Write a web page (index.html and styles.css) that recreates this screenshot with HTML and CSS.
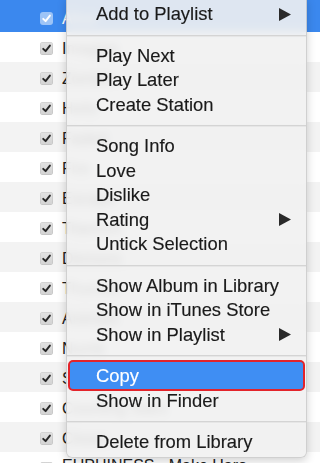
FILE: index.html
```html
<!DOCTYPE html>
<html>
<head>
<meta charset="utf-8">
<link rel="stylesheet" href="styles.css">
</head>
<body>
<div class="list">
  <div class="row sel"><span class="cb"><svg viewBox="0 0 13 13" width="13" height="13"><path d="M3.2 6.8 L5.6 9.2 L9.9 3.6" /></svg></span><span class="title">Alive</span></div>
  <div class="row"><span class="cb"><svg viewBox="0 0 13 13" width="13" height="13"><path d="M3.2 6.8 L5.6 9.2 L9.9 3.6" /></svg></span><span class="title">Imagine</span></div>
  <div class="row alt"><span class="cb"><svg viewBox="0 0 13 13" width="13" height="13"><path d="M3.2 6.8 L5.6 9.2 L9.9 3.6" /></svg></span><span class="title">Zombie</span></div>
  <div class="row"><span class="cb"><svg viewBox="0 0 13 13" width="13" height="13"><path d="M3.2 6.8 L5.6 9.2 L9.9 3.6" /></svg></span><span class="title">Hello</span></div>
  <div class="row alt"><span class="cb"><svg viewBox="0 0 13 13" width="13" height="13"><path d="M3.2 6.8 L5.6 9.2 L9.9 3.6" /></svg></span><span class="title">Faded</span></div>
  <div class="row"><span class="cb"><svg viewBox="0 0 13 13" width="13" height="13"><path d="M3.2 6.8 L5.6 9.2 L9.9 3.6" /></svg></span><span class="title">Fire</span></div>
  <div class="row alt"><span class="cb"><svg viewBox="0 0 13 13" width="13" height="13"><path d="M3.2 6.8 L5.6 9.2 L9.9 3.6" /></svg></span><span class="title">Escape</span></div>
  <div class="row"><span class="cb"><svg viewBox="0 0 13 13" width="13" height="13"><path d="M3.2 6.8 L5.6 9.2 L9.9 3.6" /></svg></span><span class="title">Titanium</span></div>
  <div class="row alt"><span class="cb"><svg viewBox="0 0 13 13" width="13" height="13"><path d="M3.2 6.8 L5.6 9.2 L9.9 3.6" /></svg></span><span class="title">Demons</span></div>
  <div class="row"><span class="cb"><svg viewBox="0 0 13 13" width="13" height="13"><path d="M3.2 6.8 L5.6 9.2 L9.9 3.6" /></svg></span><span class="title">Thunder</span></div>
  <div class="row alt"><span class="cb"><svg viewBox="0 0 13 13" width="13" height="13"><path d="M3.2 6.8 L5.6 9.2 L9.9 3.6" /></svg></span><span class="title">Animals</span></div>
  <div class="row"><span class="cb"><svg viewBox="0 0 13 13" width="13" height="13"><path d="M3.2 6.8 L5.6 9.2 L9.9 3.6" /></svg></span><span class="title">Numb</span></div>
  <div class="row alt"><span class="cb"><svg viewBox="0 0 13 13" width="13" height="13"><path d="M3.2 6.8 L5.6 9.2 L9.9 3.6" /></svg></span><span class="title">Sugar</span></div>
  <div class="row"><span class="cb"><svg viewBox="0 0 13 13" width="13" height="13"><path d="M3.2 6.8 L5.6 9.2 L9.9 3.6" /></svg></span><span class="title">Counting Stars</span></div>
  <div class="row alt"><span class="cb"><svg viewBox="0 0 13 13" width="13" height="13"><path d="M3.2 6.8 L5.6 9.2 L9.9 3.6" /></svg></span><span class="title">Closer</span></div>
  <div class="row last"><span class="cb"><svg viewBox="0 0 13 13" width="13" height="13"><path d="M3.2 6.8 L5.6 9.2 L9.9 3.6" /></svg></span><span class="title">EUPHINESS - Make Haro</span></div>
</div>

<div class="menu">
  <div class="item"><span>Add to Playlist</span><svg class="arrow" viewBox="0 0 12 13" width="12" height="13"><polygon points="0,0 12,6.5 0,13"/></svg></div>
  <div class="sep"></div>
  <div class="item"><span>Play Next</span></div>
  <div class="item"><span>Play Later</span></div>
  <div class="item"><span>Create Station</span></div>
  <div class="sep"></div>
  <div class="item"><span>Song Info</span></div>
  <div class="item"><span>Love</span></div>
  <div class="item"><span>Dislike</span></div>
  <div class="item"><span>Rating</span><svg class="arrow" viewBox="0 0 12 13" width="12" height="13"><polygon points="0,0 12,6.5 0,13"/></svg></div>
  <div class="item"><span>Untick Selection</span></div>
  <div class="sep"></div>
  <div class="item"><span>Show Album in Library</span></div>
  <div class="item"><span>Show in iTunes Store</span></div>
  <div class="item"><span>Show in Playlist</span><svg class="arrow" viewBox="0 0 12 13" width="12" height="13"><polygon points="0,0 12,6.5 0,13"/></svg></div>
  <div class="sep"></div>
  <div class="item copy"><span>Copy</span></div>
  <div class="item"><span>Show in Finder</span></div>
  <div class="sep"></div>
  <div class="item"><span>Delete from Library</span></div>
</div>
</body>
</html>
```

FILE: styles.css
```css
html, body {
  margin: 0;
  padding: 0;
  width: 320px;
  height: 463px;
  overflow: hidden;
  background: #ffffff;
  font-family: "Liberation Sans", Arial, sans-serif;
}

.list {
  display: flex;
  flex-direction: column;
}

.row {
  height: 30px;
  display: flex;
  align-items: center;
  gap: 9px;
  padding-left: 40px;
  padding-top: 3px;
  box-sizing: border-box;
  background: #ffffff;
  color: #222222;
  font-size: 16px;
  white-space: nowrap;
}

.row.alt {
  background: #f3f3f3;
}

.row.sel {
  height: 32px;
  padding-top: 5px;
  background: #3b88ee;
  color: #ffffff;
}

.row.last .title {
  margin-top: -6px;
}

.cb {
  width: 13px;
  height: 13px;
  flex: none;
  border-radius: 3px;
  background: linear-gradient(#e2e2e2, #d2d2d2);
  box-shadow: inset 0 0 0 0.5px rgba(0, 0, 0, 0.12);
  display: flex;
}

.cb svg path {
  fill: none;
  stroke: #262626;
  stroke-width: 1.9;
  stroke-linecap: round;
  stroke-linejoin: round;
}

.row.sel .cb {
  background: rgba(255, 255, 255, 0.5);
  box-shadow: none;
}

.row.sel .cb svg path {
  stroke: #ffffff;
}

.menu {
  position: absolute;
  left: 66px;
  top: -3px;
  width: 241px;
  box-sizing: border-box;
  padding: 4px 0 2.5px;
  background: rgba(241, 241, 241, 0.9);
  -webkit-backdrop-filter: blur(4px);
  backdrop-filter: blur(4px);
  border: 1px solid rgba(0, 0, 0, 0.14);
  border-radius: 0 0 6px 6px;
  box-shadow: 0 3px 10px rgba(0, 0, 0, 0.18);
  color: #1a1a1a;
  font-size: 18.4px;
  -webkit-text-stroke: 0.15px #1a1a1a;
}

.item {
  height: 24.5px;
  line-height: 24.5px;
  display: flex;
  align-items: center;
  justify-content: space-between;
  padding: 0 15px 0 29px;
  white-space: nowrap;
}

.arrow {
  fill: #2a2a2a;
  flex: none;
}

.sep {
  height: 17px;
  display: flex;
  align-items: center;
}

.sep::before {
  content: "";
  display: block;
  width: 100%;
  height: 1px;
  background: #d4d4d4;
  box-shadow: 0 1px 0 #e6e6e6;
}

.copy {
  position: relative;
  z-index: 0;
  color: #ffffff;
  -webkit-text-stroke: 0.15px #ffffff;
}

.copy::before {
  content: "";
  position: absolute;
  left: 1px;
  right: 1px;
  top: -4px;
  bottom: -2.5px;
  z-index: -1;
  background: #3f8ef3;
  border: 2px solid #e3242b;
  border-radius: 5px;
}
```
